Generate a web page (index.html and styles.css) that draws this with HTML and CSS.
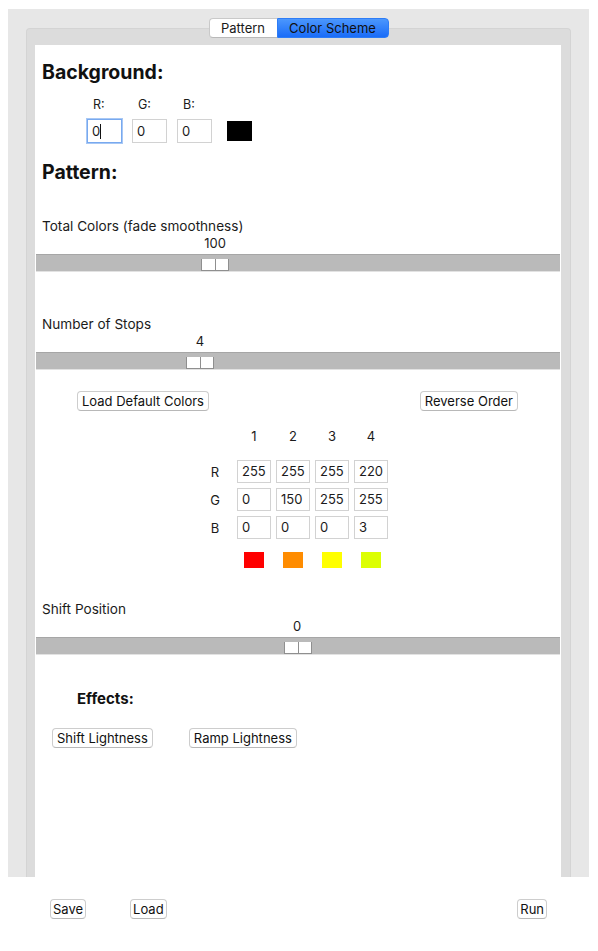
FILE: index.html
```html
<!DOCTYPE html>
<html>
<head>
<meta charset="utf-8">
<title>Color Scheme</title>
<link rel="stylesheet" href="styles.css">
</head>
<body>
<div class="window">
  <div class="tabs">
    <div class="tab">Pattern</div>
    <div class="tab active">Color Scheme</div>
  </div>
  <div class="panel">
    <div class="content">
      <h2 class="heading bg-heading">Background:</h2>
      <div class="bg-grid">
        <span class="lbl">R:</span>
        <span class="lbl">G:</span>
        <span class="lbl">B:</span>
        <span></span>
        <div class="field focused">0<span class="caret"></span></div>
        <div class="field">0</div>
        <div class="field">0</div>
        <div class="bg-swatch"></div>
      </div>

      <h2 class="heading pattern-heading">Pattern:</h2>

      <div class="slider first">
        <div class="slider-label">Total Colors (fade smoothness)</div>
        <div class="slider-value"><span style="left:179px">100</span></div>
        <div class="track"><div class="thumb" style="left:165px"><i></i><i></i></div></div>
      </div>

      <div class="slider second">
        <div class="slider-label">Number of Stops</div>
        <div class="slider-value"><span style="left:164px">4</span></div>
        <div class="track"><div class="thumb" style="left:150px"><i></i><i></i></div></div>
      </div>

      <div class="btn-row">
        <button class="btn">Load Default Colors</button>
        <button class="btn">Reverse Order</button>
      </div>

      <div class="stops">
        <span></span><span class="hdr">1</span><span class="hdr">2</span><span class="hdr">3</span><span class="hdr">4</span>
        <span class="rlbl">R</span><div class="field">255</div><div class="field">255</div><div class="field">255</div><div class="field">220</div>
        <span class="rlbl">G</span><div class="field">0</div><div class="field">150</div><div class="field">255</div><div class="field">255</div>
        <span class="rlbl">B</span><div class="field">0</div><div class="field">0</div><div class="field">0</div><div class="field">3</div>
        <span></span>
        <div class="sw-cell"><div class="sw" style="background:#ff0000"></div></div>
        <div class="sw-cell"><div class="sw" style="background:#ff8c00"></div></div>
        <div class="sw-cell"><div class="sw" style="background:#ffff00"></div></div>
        <div class="sw-cell"><div class="sw" style="background:#dcff03"></div></div>
      </div>

      <div class="slider third">
        <div class="slider-label">Shift Position</div>
        <div class="slider-value"><span style="left:261px">0</span></div>
        <div class="track"><div class="thumb" style="left:248px"><i></i><i></i></div></div>
      </div>

      <h3 class="effects">Effects:</h3>
      <div class="effects-row">
        <button class="btn">Shift Lightness</button>
        <button class="btn">Ramp Lightness</button>
      </div>
    </div>
  </div>
</div>
<div class="bottom-bar">
  <div class="left-btns">
    <button class="btn small">Save</button>
    <button class="btn small">Load</button>
  </div>
  <button class="btn small">Run</button>
</div>
</body>
</html>
```

FILE: styles.css
```css
* { box-sizing: border-box; }

html, body {
  margin: 0;
  padding: 0;
  background: #ffffff;
}

body {
  font-family: "Inter", "Liberation Sans", sans-serif;
  font-size: 13px;
  color: #1b1b1b;
}

.window {
  margin: 9px 0 0 8px;
  width: 581px;
  height: 868px;
  background: #e7e7e7;
  padding-top: 9px;
  display: flex;
  flex-direction: column;
}

.tabs {
  position: relative;
  z-index: 1;
  display: flex;
  justify-content: center;
  height: 20px;
}

.tab {
  height: 20px;
  line-height: 18px;
  font-size: 13px;
  color: #1a1a1a;
  text-align: center;
  border: 1px solid #c9c9c9;
  border-bottom-color: #b9b9b9;
  background: #ffffff;
}

.tab:first-child {
  width: 68px;
  border-radius: 4px 0 0 4px;
  border-right: none;
}

.tab.active {
  width: 112px;
  border-radius: 0 4px 4px 0;
  border-color: #2d7cf6;
  background: linear-gradient(#4b97fd, #1a6cf8);
  color: #111;
}

.panel {
  margin: -10px 0 0 18px;
  width: 545px;
  flex: 1;
  background: #dcdcdc;
  border-radius: 4px 4px 0 0;
  border: 1px solid #d4d4d4;
  border-bottom: none;
  padding: 16px 9px 0 8px;
  display: flex;
}

.content {
  flex: 1;
  background: #ffffff;
  display: flex;
  flex-direction: column;
}

.heading {
  margin: 0;
  font-size: 19.5px;
  line-height: 24px;
  font-weight: 700;
  color: #111;
  padding-left: 7px;
}

.bg-heading { margin-top: 15px; }

.bg-grid {
  margin: 13px 0 0 52px;
  display: grid;
  grid-template-columns: 35px 35px 35px 25px;
  grid-template-rows: 16px 24px;
  column-gap: 10px;
  row-gap: 6px;
  align-items: center;
}

.bg-grid .lbl {
  font-size: 12.5px;
  line-height: 16px;
  padding-left: 6px;
}

.bg-grid .bg-swatch {
  width: 25px;
  height: 20px;
  background: #000;
  margin-left: 5px;
}

.field {
  height: 24px;
  line-height: 22px;
  border: 1px solid #d2d2d2;
  padding-left: 4px;
  font-size: 13px;
  color: #1b1b1b;
  background: #fff;
  white-space: nowrap;
}

.field.focused {
  border-color: #78a9ef;
  box-shadow: 0 0 0 1px #a8c8f5;
}

.caret {
  display: inline-block;
  width: 1px;
  height: 15px;
  background: #111;
  vertical-align: -3px;
}

.pattern-heading { margin-top: 17px; }

.slider { display: flex; flex-direction: column; }
.slider.first { margin-top: 33px; }
.slider.second { margin-top: 44px; }
.slider.third { margin-top: 32px; }

.slider-label {
  height: 18px;
  line-height: 18px;
  padding-left: 7px;
  font-size: 13.6px;
}

.slider-value {
  position: relative;
  height: 19px;
  margin: 0 1px;
}

.slider-value span {
  position: absolute;
  top: 0;
  line-height: 17px;
  transform: translateX(-50%);
  font-size: 13px;
}

.track {
  position: relative;
  height: 17px;
  margin: 0 1px;
  background: #bababa;
  border-top: 1px solid #a6a6a6;
  box-shadow: 0 1px 0 #e2e2e2;
}

.thumb {
  position: absolute;
  bottom: 0;
  width: 28px;
  height: 12px;
  display: flex;
  gap: 1px;
  background: #8f8f8f;
  padding: 0 1px 1px 1px;
}

.thumb i {
  flex: 1;
  background: #ffffff;
}

.btn {
  font-family: "Inter", "Liberation Sans", sans-serif;
  font-size: 13px;
  color: #111;
  height: 20px;
  line-height: 18px;
  padding: 0 4px;
  background: #ffffff;
  border: 1px solid #cdcdcd;
  border-bottom-color: #b8b8b8;
  border-radius: 4px;
  margin: 0;
}

.btn.small { padding: 0 2px; }

.btn-row {
  margin: 22px 0 0 42px;
  display: flex;
  justify-content: space-between;
  width: 441px;
}

.stops {
  margin: 15px 0 0 163px;
  display: grid;
  grid-template-columns: 34px repeat(4, 34px);
  grid-template-rows: 29px 23px 23px 23px 24px;
  column-gap: 5px;
  row-gap: 5px;
  align-items: center;
}

.stops .hdr {
  align-self: start;
  text-align: center;
  line-height: 20px;
}

.stops .rlbl {
  text-align: center;
  font-size: 13px;
}

.stops .field { height: 23px; line-height: 21px; }

.sw-cell {
  align-self: end;
  display: flex;
  justify-content: center;
}

.sw {
  width: 20px;
  height: 16px;
}

.effects {
  margin: 35px 0 0 0;
  padding-left: 42px;
  font-size: 15px;
  line-height: 20px;
  font-weight: 700;
  color: #111;
}

.effects-row {
  margin: 19px 0 0 17px;
  display: flex;
  gap: 36px;
}

.bottom-bar {
  margin: 22px 0 0 50px;
  width: 497px;
  display: flex;
  justify-content: space-between;
}

.left-btns {
  display: flex;
  gap: 44px;
}
```
